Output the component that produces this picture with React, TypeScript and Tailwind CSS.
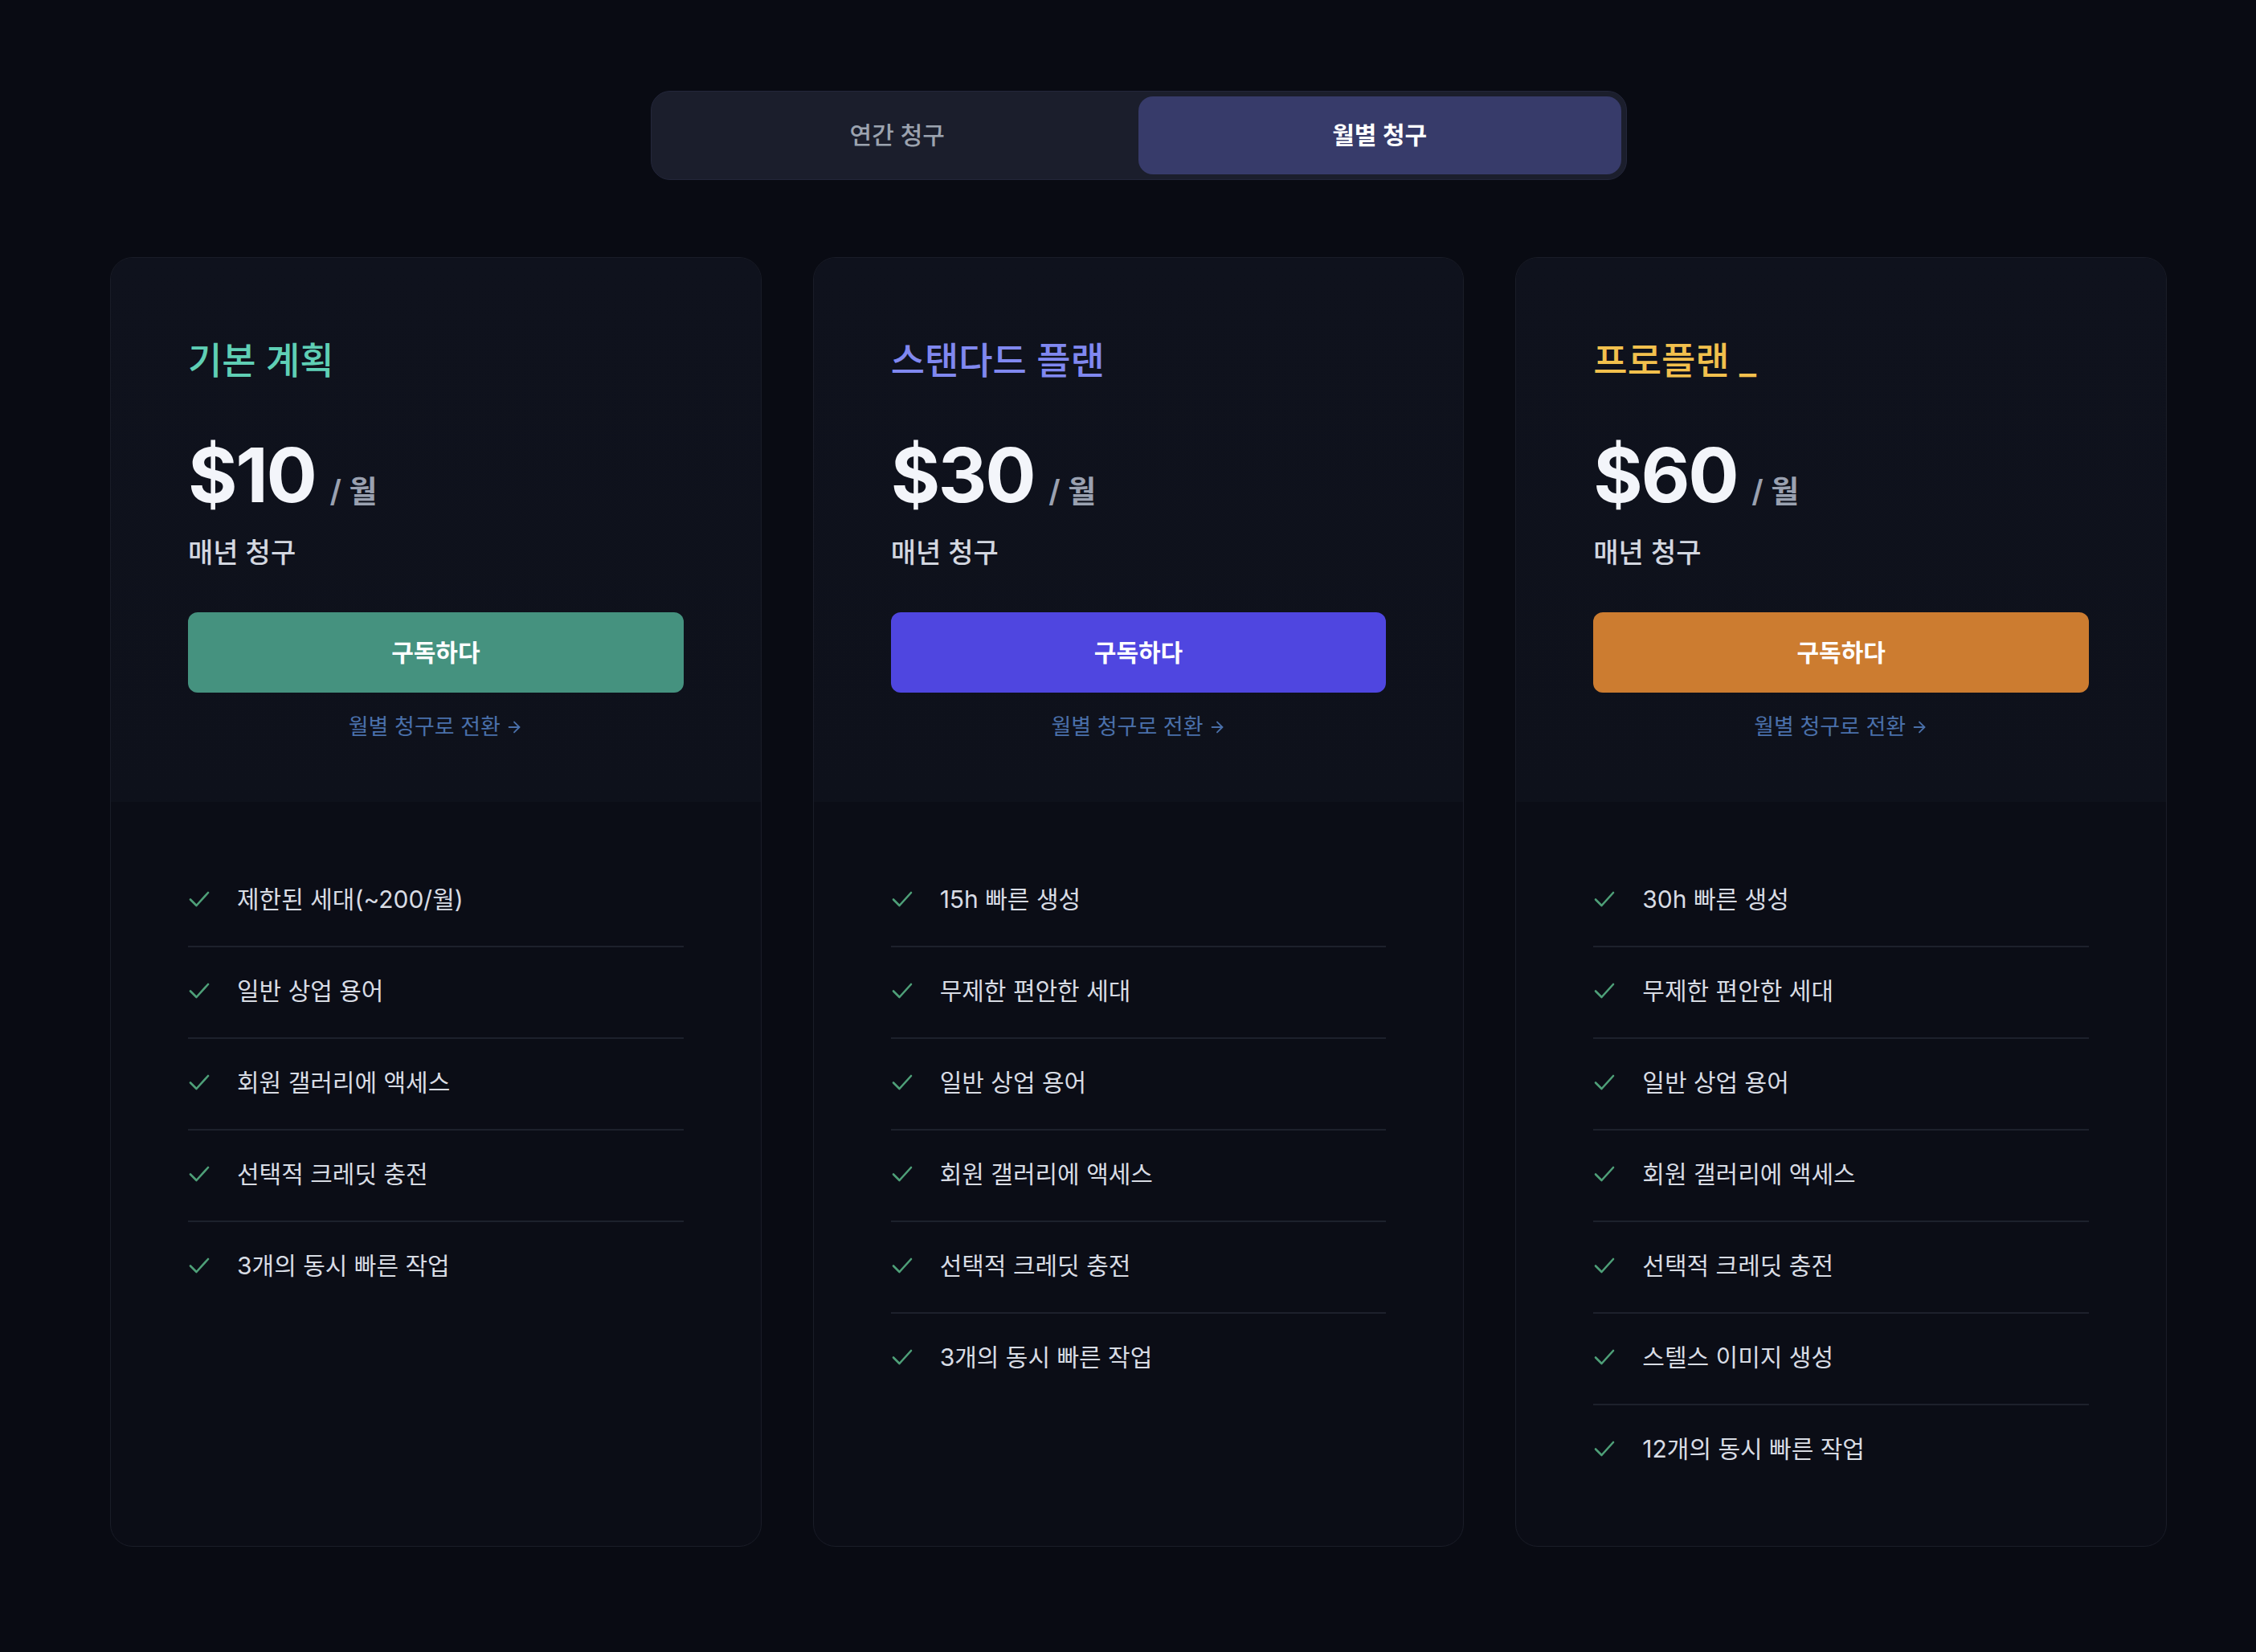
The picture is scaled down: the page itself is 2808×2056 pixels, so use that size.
import React from "react";
import { ArrowRight } from "lucide-react";

type Plan = {
  name: string;
  titleClass: string;
  price: string;
  buttonClass: string;
  features: string[];
};

const plans: Plan[] = [
  {
    name: "기본 계획",
    titleClass: "text-[#5fcfb5]",
    price: "$10",
    buttonClass: "bg-[#45927f]",
    features: [
      "제한된 세대(~200/월)",
      "일반 상업 용어",
      "회원 갤러리에 액세스",
      "선택적 크레딧 충전",
      "3개의 동시 빠른 작업",
    ],
  },
  {
    name: "스탠다드 플랜",
    titleClass: "text-[#8088f0]",
    price: "$30",
    buttonClass: "bg-[#4f46e0]",
    features: [
      "15h 빠른 생성",
      "무제한 편안한 세대",
      "일반 상업 용어",
      "회원 갤러리에 액세스",
      "선택적 크레딧 충전",
      "3개의 동시 빠른 작업",
    ],
  },
  {
    name: "프로플랜 _",
    titleClass: "text-[#f2c04d]",
    price: "$60",
    buttonClass: "bg-[#cc7c30]",
    features: [
      "30h 빠른 생성",
      "무제한 편안한 세대",
      "일반 상업 용어",
      "회원 갤러리에 액세스",
      "선택적 크레딧 충전",
      "스텔스 이미지 생성",
      "12개의 동시 빠른 작업",
    ],
  },
];

function CheckMark() {
  return (
    <svg width="28" height="24" viewBox="0 0 28 24" fill="none" className="shrink-0">
      <polyline
        points="3,12.5 10.5,20 25,4"
        stroke="#4e9f78"
        strokeWidth="2.6"
        strokeLinecap="round"
        strokeLinejoin="round"
      />
    </svg>
  );
}

function PlanCard({ plan }: { plan: Plan }) {
  return (
    <div className="flex flex-col overflow-hidden rounded-[28px] border border-[#1a1d28] bg-[#0b0d16]">
      <div className="flex flex-col bg-gradient-to-b from-[#0f121d] to-[#0e111b] px-[96px] pt-[100px] pb-[76px]">
        <div className={`text-[46px] leading-[54px] font-medium ${plan.titleClass}`}>
          {plan.name}
        </div>
        <div className="mt-[69px] flex items-baseline">
          <span className="text-[94px] leading-none font-bold tracking-tight text-[#f3f5fa]">
            {plan.price}
          </span>
          <span className="ml-[18px] text-[38px] leading-none font-semibold text-[#9aa1b0]">
            / 월
          </span>
        </div>
        <div className="mt-[29px] text-[34px] leading-[42px] font-medium text-[#d3d7e0]">
          매년 청구
        </div>
        <button
          className={`mt-[53px] flex h-[100px] w-full items-center justify-center rounded-[12px] text-[30px] font-semibold text-white ${plan.buttonClass}`}
        >
          구독하다
        </button>
        <div className="mt-[26px] flex items-center justify-center gap-[6px] text-[27px] leading-[34px] text-[#4a70aa]">
          <span>월별 청구로 전환</span>
          <ArrowRight size={22} strokeWidth={2} />
        </div>
      </div>
      <div className="flex flex-1 flex-col px-[96px] pt-[67px] pb-[63px]">
        {plan.features.map((f, i) => (
          <div
            key={i}
            className={`flex items-center pt-[34px] pb-[38px] ${
              i < plan.features.length - 1 ? "border-b-2 border-[#1d212c]" : ""
            }`}
          >
            <CheckMark />
            <span className="ml-[33px] text-[30px] leading-[40px] text-[#d8dce4]">{f}</span>
          </div>
        ))}
      </div>
    </div>
  );
}

export default function App() {
  return (
    <div
      className="min-h-screen w-full bg-[#090b13]"
      style={{ fontFamily: "Inter, 'Noto Sans CJK KR', 'Noto Sans', sans-serif" }}
    >
      <div className="flex flex-col items-center pt-[113px] pb-[131px] pl-[26px]">
        <div className="grid h-[111px] w-[1215px] grid-cols-2 rounded-[24px] border border-[#23263a] bg-[#1b1e2c] p-[6px]">
          <button className="flex items-center justify-center rounded-[18px] text-[30px] font-medium text-[#9ca3af]">
            연간 청구
          </button>
          <button className="flex items-center justify-center rounded-[18px] bg-[#373b6a] text-[30px] font-semibold text-white">
            월별 청구
          </button>
        </div>
        <div className="mt-[96px] grid w-[2560px] grid-cols-3 gap-[64px]">
          {plans.map((p) => (
            <PlanCard key={p.name} plan={p} />
          ))}
        </div>
      </div>
    </div>
  );
}
